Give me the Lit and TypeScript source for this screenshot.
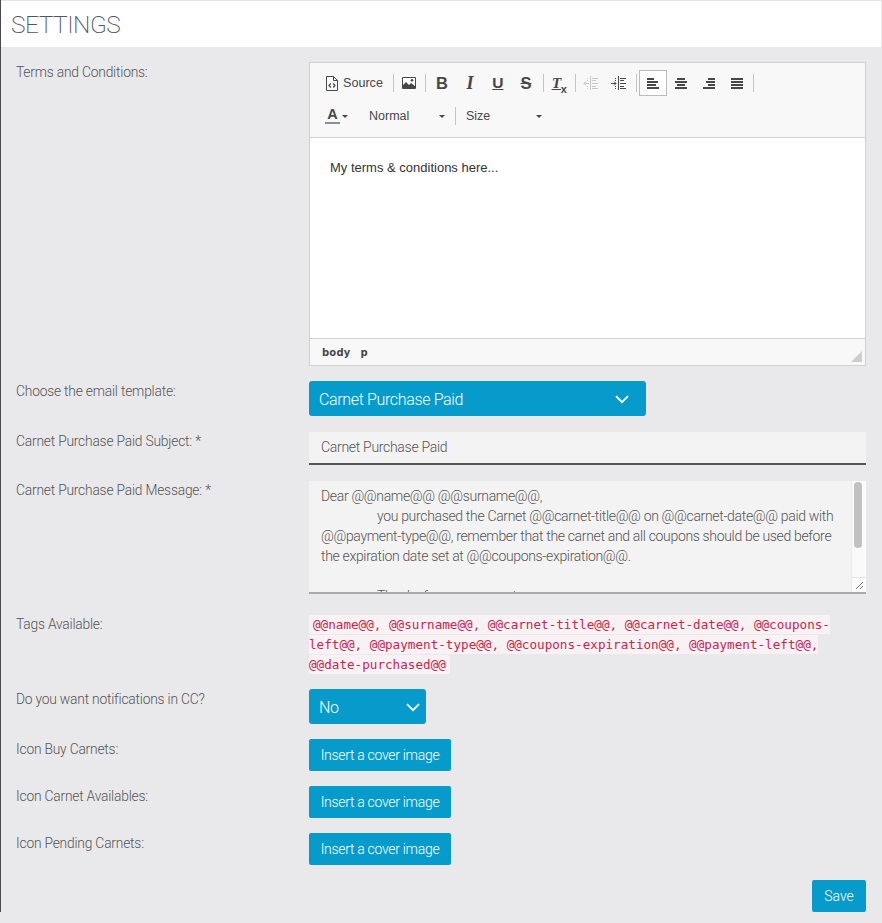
import { LitElement, html, css, svg } from "lit";
import { customElement } from "lit/decorators.js";

const ink = "#474747";

const alignIcon = (rows: [number, number][], color = ink) => html`<svg width="16" height="16" viewBox="0 0 16 16">
  ${rows.map((r, i) => svg`<rect x=${r[0]} y=${3 + i * 3} width=${r[1]} height="2" fill=${color}></rect>`)}
</svg>`;

const indentIcon = (outdent: boolean, color: string) => html`<svg width="16" height="16" viewBox="0 0 16 16">
  <rect x="7" y="1" width="1" height="14" fill=${color}></rect>
  <rect x="9" y="3" width="6" height="1" fill=${color}></rect>
  <rect x="9" y="5" width="4" height="1" fill=${color}></rect>
  <rect x="9" y="8" width="6" height="1" fill=${color}></rect>
  <rect x="9" y="11" width="4" height="1" fill=${color}></rect>
  <rect x="9" y="13" width="6" height="1" fill=${color}></rect>
  <rect x="4" y="3" width="1" height="1" fill=${color}></rect>
  <rect x="4" y="5" width="1" height="1" fill=${color}></rect>
  <rect x="4" y="11" width="1" height="1" fill=${color}></rect>
  <rect x="4" y="13" width="1" height="1" fill=${color}></rect>
  <path d=${outdent ? "M1 8.5h5M3 6.5L1 8.5l2 2" : "M0 8.5h5M3 6.5l2 2-2 2"} fill="none" stroke=${color}></path>
</svg>`;

const chevron = html`<svg class="chev" width="14" height="9" viewBox="0 0 14 9"><path d="M1 1.2l6 6 6-6" fill="none" stroke="#fff" stroke-width="1.8"></path></svg>`;

@customElement("app-root")
export class AppRoot extends LitElement {
  static styles = css`
    :host { display: block; min-height: 923px; background: #e9e9eb; font-family: "Liberation Sans", Arial, sans-serif; font-size: 14px; color: #555; }
    .page { border-left: 1px solid #4a4a4a; width: 880px; }
    .head { border-top: 1px solid #e4e4e4; background: #fff; display: flex; align-items: center; padding: 2px 0 0 10px; box-sizing: border-box; height: 47px; }
    h1 { margin: 0; font: 200 24.5px/1 Roboto, sans-serif; color: #4f5564; letter-spacing: -0.5px; }
    .form { padding: 15px 15px 0 15px; display: flex; flex-direction: column; gap: 15px; width: 850px; }
    .row { display: grid; grid-template-columns: 293px 557px; }
    .lbl { font: 300 13.8px/20px Roboto, sans-serif; color: #555; letter-spacing: -0.2px; }
    .lbl.up { margin-top: -1px; }
    .editor { border: 1px solid #d1d1d1; height: 304px; box-sizing: border-box; display: flex; flex-direction: column; background: #fff; }
    .bar { background: #f8f8f8; border-bottom: 1px solid #d1d1d1; height: 75px; box-sizing: border-box; padding: 6px 0 0 10px; color: #474747; font-family: "Liberation Sans", sans-serif; }
    .tr { display: flex; align-items: center; height: 28px; }
    .tr + .tr { margin-top: 5px; }
    .sep { width: 1px; height: 18px; background: #c4c4c4; margin: 0 1px 0 3px; flex: none; }
    .sep.last { margin-left: 2px; }
    .b { width: 28px; height: 26px; box-sizing: border-box; display: flex; align-items: center; justify-content: center; font-size: 15px; line-height: 16px; flex: none; }
    .b.img { width: 26px; }
    .b.ml1 { margin-left: 1px; }
    .b.mln1 { margin-left: -1px; }
    .b.active { background: #fff; border: 1px solid #bcbcbc; }
    .b .bold { font-weight: 700; font-size: 16.5px; }
    .b .i { font-weight: 700; font-style: italic; font-family: "Liberation Serif", serif; font-size: 18px; }
    .b .u { font-weight: 700; text-decoration: underline; font-size: 15.5px; }
    .b .s { font-weight: 700; text-decoration: line-through; font-size: 16.5px; }
    .tx { position: relative; font-weight: 700; font-style: italic; font-family: "Liberation Serif", serif; text-decoration: underline; font-size: 15.5px; margin-left: -3px; }
    .tx sub { position: absolute; left: 9px; top: 6px; font-family: "Liberation Sans", sans-serif; font-size: 11px; font-style: normal; display: inline-block; }
    .src { display: flex; align-items: center; gap: 5px; padding: 0 7px 0 6px; font-size: 12.6px; height: 26px; flex: none; }
    .color { display: flex; align-items: center; gap: 2px; padding: 0 0 0 5px; height: 26px; width: 32px; box-sizing: border-box; }
    .colA { font-weight: 700; font-size: 14.5px; line-height: 13px; border-bottom: 2px solid #8e8e8e; width: 15px; text-align: center; padding-bottom: 1px; }
    .caret { width: 0; height: 0; border-left: 3px solid transparent; border-right: 3px solid transparent; border-top: 3px solid #474747; }
    .combo { display: flex; align-items: center; justify-content: space-between; font-size: 12.5px; box-sizing: border-box; height: 26px; }
    .combo.fmt { width: 100px; padding: 0 7px 0 17px; }
    .combo.size { width: 90px; padding: 0 5px 0 9px; }
    .content { flex: 1; padding: 20px 20px; font: 13px/20px "Liberation Sans", sans-serif; color: #333; }
    .foot { position: relative; height: 27px; background: #f8f8f8; border-top: 1px solid #d1d1d1; box-sizing: border-box; padding: 7px 12px 0; font: 700 10px/14px "DejaVu Sans", sans-serif; color: #484848; display: flex; gap: 10px; letter-spacing: .2px; }
    .grip { position: absolute; right: 3px; bottom: 3px; width: 0; height: 0; border-style: solid; border-width: 0 0 11px 11px; border-color: transparent transparent #cdcdcd transparent; }
    .select { background: #079bcb; color: #fff; border-radius: 3px; height: 35px; box-sizing: border-box; display: flex; align-items: center; justify-content: space-between; padding: 2px 17px 0 10px; font: 300 16px/1 Roboto, sans-serif; letter-spacing: -0.35px; }
    .select.w1 { width: 337px; }
    .select.w2 { width: 117px; padding-right: 6px; }
    .input { background: #f3f3f3; height: 33px; border-bottom: 2px solid #555; box-sizing: border-box; padding: 0 12px 1px; display: flex; align-items: center; font: 300 14px/1 Roboto, sans-serif; color: #555; letter-spacing: -0.3px; }
    .ta { position: relative; height: 113px; background: #f3f3f3; border-bottom: 2px solid #a9a9a9; box-sizing: border-box; overflow: hidden; padding: 5px 32px 0 12px; font: 300 14px/20px Roboto, sans-serif; color: #555; white-space: pre; tab-size: 56px; letter-spacing: -0.33px; }
    .sb { position: absolute; right: 0; top: 0; bottom: 0; width: 15px; background: #fafafa; border-left: 1px solid #ececec; box-sizing: border-box; }
    .thumb { position: absolute; left: 2px; top: 1px; width: 8px; height: 66px; border-radius: 4px; background: #c1c1c1; }
    .rsz { position: absolute; right: 0; bottom: 0; width: 15px; height: 15px; background: #fbfbfb; border-top: 1px solid #e4e4e4; border-left: 1px solid #ececec; box-sizing: border-box; }
    .rsz svg { display: block; }
    .tags { font: 12.6px/20px "DejaVu Sans Mono", monospace; letter-spacing: 0.02px; margin: 1px 0 -1px; }
    code { font: inherit; color: #c7254e; background: #f9f2f4; padding: 2px 4px; border-radius: 2px; }
    .btn { background: #079bcb; color: #fff; border: 0; border-radius: 2px; height: 32px; padding: 0; font: 300 14px/32px Roboto, sans-serif; text-align: center; display: block; }
    .btn.cover { width: 142px; letter-spacing: -0.3px; }
    .actions { display: flex; justify-content: flex-end; }
    .btn.save { width: 54px; }
    .after-input { margin-top: 1px; }
    .after-ta { margin-top: 5px; }
  `;

  render() {
    const gray = "#c6c6c6";
    const imgIcon = html`<svg width="14" height="12" viewBox="0 0 14 12"><path d="M.5.5h13v11H.5z" fill="#fff" stroke="${ink}"></path><path d="M1 11V8l3-3 3 3 2-2 4 3v2z" fill="${ink}"></path><circle cx="10" cy="3.2" r="1.3" fill="${ink}"></circle></svg>`;
    const srcIcon = html`<svg width="12" height="15" viewBox="0 0 12 15"><path d="M.5.5h7l4 4v10H.5zM7.5.5v4h4" fill="none" stroke="${ink}"></path><path d="M4.8 7.5L3 9.5l1.8 2M7.2 7.5L9 9.5l-1.8 2" fill="none" stroke="${ink}" stroke-width="1.2"></path></svg>`;
    const cover = html`<button class="btn cover">Insert a cover image</button>`;
    return html`<div class="page">
      <div class="head"><h1>SETTINGS</h1></div>
      <div class="form">
        <div class="row">
          <div class="lbl">Terms and Conditions:</div>
          <div class="editor">
            <div class="bar">
              <div class="tr">
                <div class="src">${srcIcon}<span>Source</span></div><div class="sep"></div>
                <div class="b img ml1">${imgIcon}</div><div class="sep"></div>
                <div class="b ml1"><span class="bold">B</span></div>
                <div class="b"><span class="i">I</span></div>
                <div class="b"><span class="u">U</span></div>
                <div class="b"><span class="s">S</span></div><div class="sep"></div>
                <div class="b mln1"><span class="tx">T<sub>x</sub></span></div><div class="sep"></div>
                <div class="b">${indentIcon(true, gray)}</div>
                <div class="b">${indentIcon(false, ink)}</div><div class="sep"></div>
                <div class="b active ml1">${alignIcon([[2, 7], [2, 11], [2, 9], [2, 12]])}</div>
                <div class="b">${alignIcon([[4, 8], [2, 12], [4, 8], [2, 12]])}</div>
                <div class="b">${alignIcon([[7, 7], [5, 9], [7, 7], [2, 12]])}</div>
                <div class="b">${alignIcon([[2, 12], [2, 12], [2, 12], [2, 12]])}</div><div class="sep last"></div>
              </div>
              <div class="tr">
                <div class="color"><span class="colA">A</span><span class="caret"></span></div>
                <div class="combo fmt"><span>Normal</span><span class="caret"></span></div><div class="sep"></div>
                <div class="combo size"><span>Size</span><span class="caret"></span></div>
              </div>
            </div>
            <div class="content">My terms &amp; conditions here...</div>
            <div class="foot"><span>body</span><span>p</span><span class="grip"></span></div>
          </div>
        </div>
        <div class="row">
          <div class="lbl">Choose the email template:</div>
          <div><div class="select w1"><span>Carnet Purchase Paid</span>${chevron}</div></div>
        </div>
        <div class="row after-input">
          <div class="lbl up">Carnet Purchase Paid Subject: *</div>
          <div class="input">Carnet Purchase Paid</div>
        </div>
        <div class="row after-input">
          <div class="lbl up">Carnet Purchase Paid Message: *</div>
          <div class="ta">Dear @@name@@ @@surname@@,
	you purchased the Carnet @@carnet-title@@ on @@carnet-date@@ paid with
@@payment-type@@, remember that the carnet and all coupons should be used before
the expiration date set at @@coupons-expiration@@.

	Thanks for your support<div class="sb"><div class="thumb"></div></div><div class="rsz"><svg width="14" height="14" viewBox="0 0 14 14"><path d="M4 11l7-7M8 11l3-3" stroke="#777" stroke-width="1" fill="none"></path></svg></div></div>
        </div>
        <div class="row after-ta">
          <div class="lbl">Tags Available:</div>
          <div class="tags"><code>@@name@@, @@surname@@, @@carnet-title@@, @@carnet-date@@, @@coupons-left@@, @@payment-type@@, @@coupons-expiration@@, @@payment-left@@, @@date-purchased@@</code></div>
        </div>
        <div class="row">
          <div class="lbl">Do you want notifications in CC?</div>
          <div><div class="select w2"><span>No</span>${chevron}</div></div>
        </div>
        <div class="row"><div class="lbl">Icon Buy Carnets:</div><div>${cover}</div></div>
        <div class="row"><div class="lbl">Icon Carnet Availables:</div><div>${cover}</div></div>
        <div class="row"><div class="lbl">Icon Pending Carnets:</div><div>${cover}</div></div>
        <div class="actions"><button class="btn save">Save</button></div>
      </div>
    </div>`;
  }
}
